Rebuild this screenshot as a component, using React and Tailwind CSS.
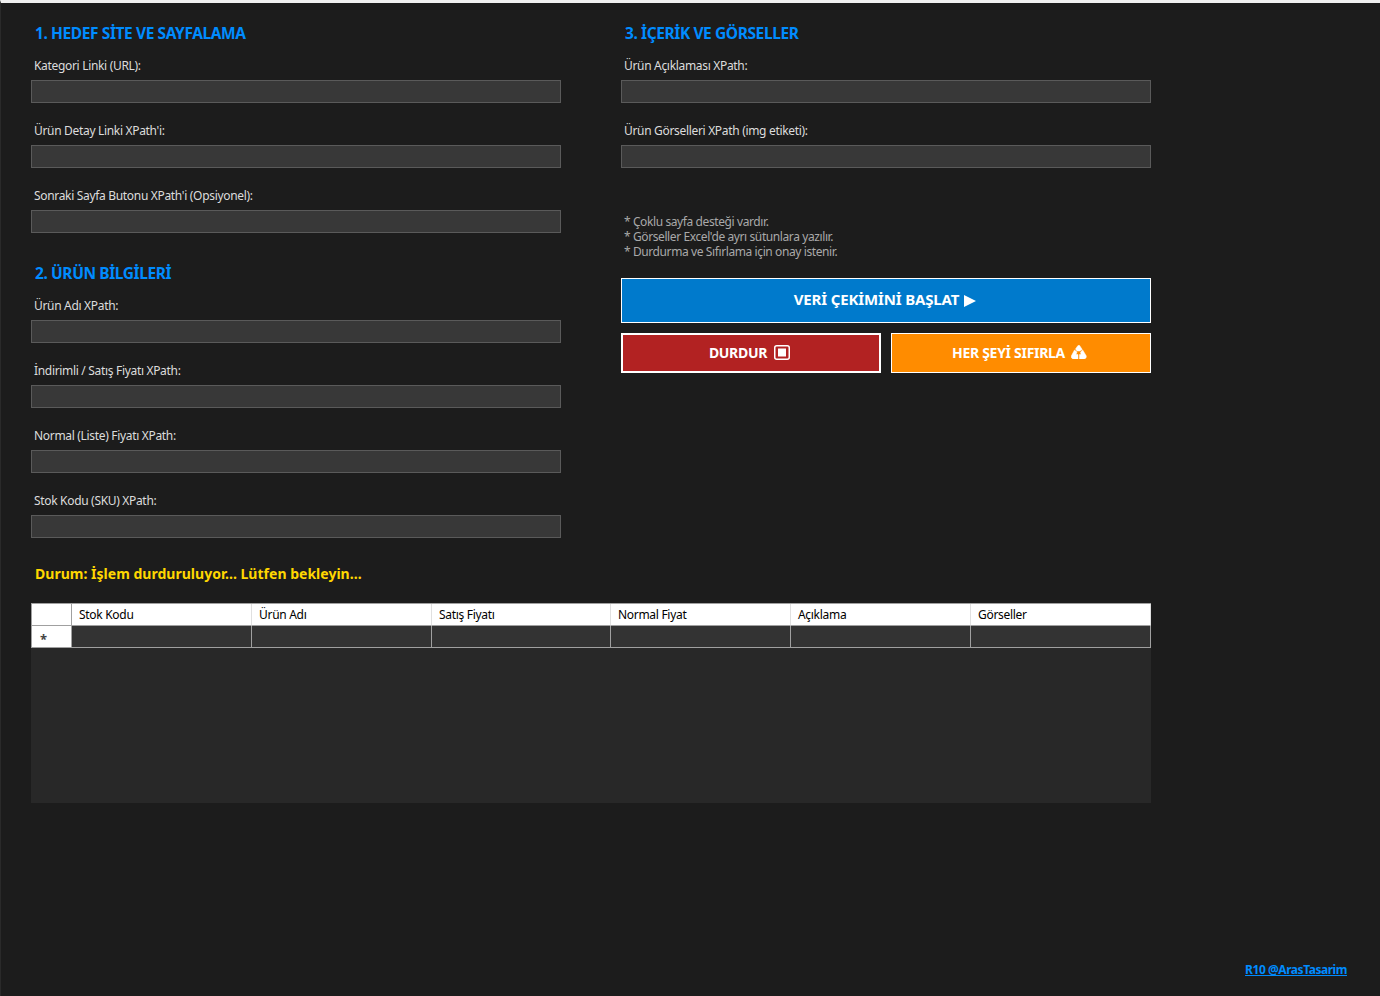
const Field = ({ label }) => (
  <div className="h-[65px]">
    <div className="h-[22px] pl-[3px] text-[12px] leading-[16px] tracking-[-0.32px] text-[#dcdcdc]">{label}</div>
    <div className="h-[23px] bg-[#383838] border border-[#5a5a5a]"></div>
  </div>
);

const Title = ({ children, className = '' }) => (
  <h2 className={`h-[20px] pl-[4px] mb-[15px] text-[15.5px] leading-[20px] tracking-[-0.4px] font-bold text-[#008cff] ${className}`}>
    {children}
  </h2>
);

const RecycleIcon = () => (
  <svg width="16" height="14" viewBox="0 0 16 14" fill="white" stroke="white" strokeWidth="0.5">
    <path d="M4.5 4L7 .5Q7.8 0 8.6 .5L11.2 4.5 9 6H6z" />
    <path d="M3.5 5L6 7 5 9.5H7V14H2.5Q0 13.5 .3 11z" />
    <path d="M11.7 5L15.3 11Q15.6 13.5 13 14H8.5V9.5H10L9.6 7z" />
  </svg>
);

const columns = ['Stok Kodu', 'Ürün Adı', 'Satış Fiyatı', 'Normal Fiyat', 'Açıklama', 'Görseller'];

export default function App() {
  return (
    <div
      className="h-[996px] flex flex-col bg-[#1c1c1c] border-t-[3px] border-t-[#f0f0f0] border-l border-l-[#2a2a2a] overflow-hidden"
      style={{ fontFamily: '"Noto Sans", sans-serif' }}
    >
      <div className="w-[1120px] ml-[30px] mt-[20px]">
        <div className="flex gap-[60px]">
          <div className="w-[530px]">
            <Title>1. HEDEF SİTE VE SAYFALAMA</Title>
            <Field label="Kategori Linki (URL):" />
            <Field label="Ürün Detay Linki XPath'i:" />
            <Field label="Sonraki Sayfa Butonu XPath'i (Opsiyonel):" />
            <Title className="mt-[10px]">2. ÜRÜN BİLGİLERİ</Title>
            <Field label="Ürün Adı XPath:" />
            <Field label="İndirimli / Satış Fiyatı XPath:" />
            <Field label="Normal (Liste) Fiyatı XPath:" />
            <Field label="Stok Kodu (SKU) XPath:" />
          </div>
          <div className="w-[530px]">
            <Title>3. İÇERİK VE GÖRSELLER</Title>
            <Field label="Ürün Açıklaması XPath:" />
            <Field label="Ürün Görselleri XPath (img etiketi):" />
            <div className="pt-[26px] pl-[3px] text-[12px] leading-[15px] tracking-[-0.4px] text-[#a9a9a9]">
              <p>* Çoklu sayfa desteği vardır.</p>
              <p>* Görseller Excel'de ayrı sütunlara yazılır.</p>
              <p>* Durdurma ve Sıfırlama için onay istenir.</p>
            </div>
            <button className="mt-[19px] w-full h-[45px] pr-[2px] flex items-center justify-center gap-[5px] bg-[#007acc] border border-white text-white text-[15px] tracking-[-0.15px] font-bold">
              <span className="pb-[2px]">VERİ ÇEKİMİNİ BAŞLAT</span>
              <svg width="12" height="12" viewBox="0 0 12 12" fill="white"><polygon points="0,0 12,6 0,12" /></svg>
            </button>
            <div className="flex gap-[10px] mt-[10px]">
              <button className="w-[260px] h-[40px] pr-[3px] pb-[2px] flex items-center justify-center gap-[7px] bg-[#b22222] border-2 border-white text-white text-[14px] tracking-[-0.3px] font-bold">
                DURDUR
                <svg width="16" height="15" viewBox="0 0 16 15">
                  <rect x="0.75" y="0.75" width="14.5" height="13.5" rx="2" fill="none" stroke="white" strokeWidth="1.5" />
                  <rect x="4" y="3.5" width="8" height="8" fill="white" />
                </svg>
              </button>
              <button className="w-[260px] h-[40px] pr-[3px] pb-[2px] flex items-center justify-center gap-[6px] bg-[#ff8c00] border border-white text-white text-[14px] tracking-[-0.3px] font-bold">
                HER ŞEYİ SIFIRLA
                <RecycleIcon />
              </button>
            </div>
          </div>
        </div>

        <div className="mt-[6px] h-[20px] pl-[4px] text-[14px] leading-[20px] tracking-[0.02px] font-bold text-[#ffd700]">
          Durum: İşlem durduruluyor... Lütfen bekleyin...
        </div>

        <div className="mt-[19px] h-[200px] bg-[#282828] text-[12px] tracking-[-0.3px]">
          <div className="grid grid-cols-[41px_180px_180px_179px_180px_180px_180px] h-[23px] bg-white text-black border-t border-t-[#a0a0a0]">
            <div className="border-l border-l-[#a0a0a0] border-r border-r-[#a0a0a0] border-b border-b-[#a0a0a0]"></div>
            {columns.map((c) => (
              <div key={c} className="pl-[7px] leading-[21px] border-r border-r-[#e0e0e0] border-b border-b-[#a0a0a0]">{c}</div>
            ))}
          </div>
          <div className="grid grid-cols-[41px_180px_180px_179px_180px_180px_180px] h-[22px]">
            <div className="bg-white border-l border-r border-b border-[#a0a0a0] text-[#444] text-[13px] leading-[16px] pt-[5px] pl-[8px] font-bold">*</div>
            {columns.map((c) => (
              <div key={c} className="bg-[#333333] border-r border-b border-[#a0a0a0]"></div>
            ))}
          </div>
        </div>
      </div>

      <div className="mt-auto mb-[18px] flex justify-end pr-[33px]">
        <a href="#" className="text-[12px] leading-[16px] tracking-[-0.45px] font-bold text-[#008cff] underline">R10 @ArasTasarim</a>
      </div>
    </div>
  );
}
